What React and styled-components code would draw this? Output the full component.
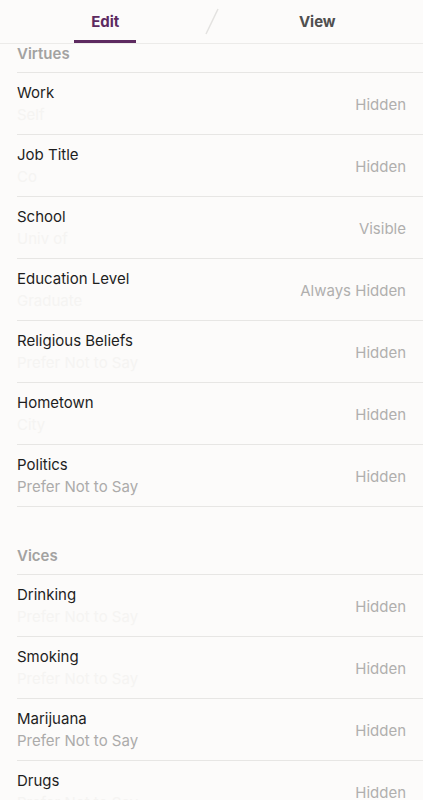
import React from "react";
import styled, { createGlobalStyle } from "styled-components";

const GlobalStyle = createGlobalStyle`
  html, body {
    margin: 0;
    padding: 0;
    background: #fcfbfa;
  }
  body {
    font-family: Inter, "Noto Sans", "Liberation Sans", sans-serif;
    -webkit-font-smoothing: antialiased;
  }
`;

const Page = styled.div`
  width: 423px;
  height: 800px;
  overflow: hidden;
  background: #fcfbfa;
`;

const TabBar = styled.div`
  display: grid;
  grid-template-columns: 1fr 0 1fr;
  height: 43px;
  border-bottom: 1px solid #ecebe9;
`;

const Tab = styled.div`
  display: flex;
  justify-content: center;
  align-items: stretch;
`;

const TabLabel = styled.div`
  display: flex;
  align-items: center;
  justify-content: center;
  width: 62px;
  padding-top: 2px;
  margin-left: ${(p) => (p.$active ? "-1px" : "0")};
  font-size: 15px;
  font-weight: 700;
  color: ${(p) => (p.$active ? "#5d2a60" : "#4f4f4f")};
  border-bottom: 3px solid ${(p) => (p.$active ? "#5d2a60" : "transparent")};
  box-sizing: border-box;
`;

const Slash = styled.div`
  position: relative;
  svg {
    position: absolute;
    left: -8px;
    top: 8px;
  }
`;

const Section = styled.section`
  padding-left: 17px;
  margin-top: ${(p) => p.$gap || 0}px;
`;

const SectionTitle = styled.div`
  font-size: 15px;
  font-weight: 600;
  line-height: 20px;
  color: #a3a2a1;
  padding-bottom: 8px;
  border-bottom: 1px solid #e7e6e4;
`;

const Row = styled.div`
  display: flex;
  align-items: center;
  justify-content: space-between;
  padding: 10px 17px 9px 0;
  border-bottom: 1px solid #e7e6e4;
`;

const RowText = styled.div`
  display: flex;
  flex-direction: column;
  gap: 2px;
`;

const RowTitle = styled.div`
  font-size: 15px;
  line-height: 20px;
  color: #1e1e1e;
`;

const RowValue = styled.div`
  font-size: 15px;
  line-height: 20px;
  color: ${(p) => (p.$faint ? "#f5f4f2" : "#acabaa")};
`;

const Visibility = styled.div`
  font-size: 15px;
  line-height: 20px;
  color: #b0afae;
  margin-top: 2px;
`;

const virtues = [
  { title: "Work", value: "Self", faint: true, vis: "Hidden" },
  { title: "Job Title", value: "Co", faint: true, vis: "Hidden" },
  { title: "School", value: "Univ of", faint: true, vis: "Visible" },
  { title: "Education Level", value: "Graduate", faint: true, vis: "Always Hidden" },
  { title: "Religious Beliefs", value: "Prefer Not to Say", faint: true, vis: "Hidden" },
  { title: "Hometown", value: "City", faint: true, vis: "Hidden" },
  { title: "Politics", value: "Prefer Not to Say", vis: "Hidden" },
];

const vices = [
  { title: "Drinking", value: "Prefer Not to Say", faint: true, vis: "Hidden" },
  { title: "Smoking", value: "Prefer Not to Say", faint: true, vis: "Hidden" },
  { title: "Marijuana", value: "Prefer Not to Say", vis: "Hidden" },
  { title: "Drugs", value: "Prefer Not to Say", faint: true, vis: "Hidden" },
];

const InfoRow = ({ title, value, faint, vis }) => (
  <Row>
    <RowText>
      <RowTitle>{title}</RowTitle>
      <RowValue $faint={faint}>{value}</RowValue>
    </RowText>
    <Visibility>{vis}</Visibility>
  </Row>
);

export default function App() {
  return (
    <Page>
      <GlobalStyle />
      <TabBar>
        <Tab>
          <TabLabel $active>Edit</TabLabel>
        </Tab>
        <Slash>
          <svg width="16" height="28" viewBox="0 0 16 28">
            <line x1="2" y1="26" x2="14" y2="1" stroke="#e3e2e0" strokeWidth="1.5" />
          </svg>
        </Slash>
        <Tab>
          <TabLabel>View</TabLabel>
        </Tab>
      </TabBar>

      <Section>
        <SectionTitle>Virtues</SectionTitle>
        {virtues.map((item) => (
          <InfoRow key={item.title} {...item} />
        ))}
      </Section>

      <Section $gap={39}>
        <SectionTitle>Vices</SectionTitle>
        {vices.map((item) => (
          <InfoRow key={item.title} {...item} />
        ))}
      </Section>
    </Page>
  );
}
